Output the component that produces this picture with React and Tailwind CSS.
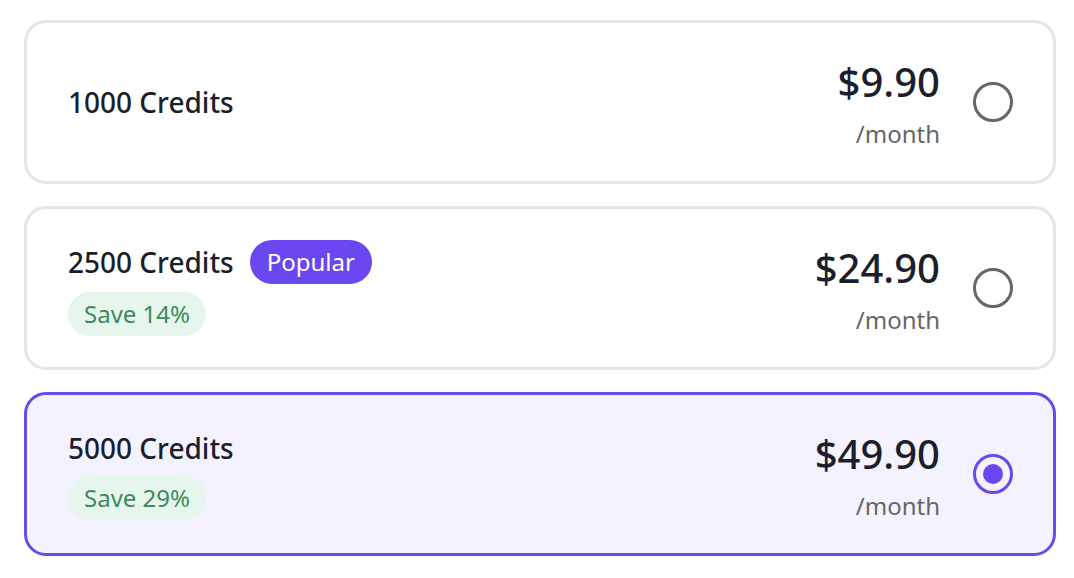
import React, { useState } from 'react';

const plans = [
  { id: 1000, label: '1000 Credits', price: '$9.90' },
  { id: 2500, label: '2500 Credits', price: '$24.90', popular: true, save: 'Save 14%' },
  { id: 5000, label: '5000 Credits', price: '$49.90', save: 'Save 29%' },
];

const App = () => {
  const [selected, setSelected] = useState(5000);

  return (
    <div className="min-h-screen bg-white px-[24px] pt-[20px] font-['Noto_Sans',sans-serif]">
      <div className="flex w-[1032px] flex-col gap-[22px]">
        {plans.map((plan) => {
          const active = plan.id === selected;
          return (
            <button
              key={plan.id}
              onClick={() => setSelected(plan.id)}
              className={`flex h-[164px] items-center rounded-[22px] border-[3px] pl-[41px] pr-[40px] text-left ${
                active ? 'border-[#6a4aec] bg-[#f4f2fe]' : 'border-[#e6e6e6] bg-white'
              }`}
            >
              <div className="flex flex-1 flex-col items-start gap-[8px]">
                <div className="flex items-center gap-[16px]">
                  <span className="text-[28px] font-medium leading-[40px] text-[#1b1e2b]">{plan.label}</span>
                  {plan.popular && (
                    <span className="rounded-full bg-[#6a47f0] px-[17px] text-[24px] leading-[44px] text-white">
                      Popular
                    </span>
                  )}
                </div>
                {plan.save && (
                  <span className="rounded-full bg-[#e6f6ec] px-[16px] text-[24px] leading-[44px] text-[#3e8a5d]">
                    {plan.save}
                  </span>
                )}
              </div>
              <div className="flex flex-col items-end pt-[4px]">
                <span className="text-[40px] font-medium leading-[48px] text-[#1b1e2b]">{plan.price}</span>
                <span className="mt-[12px] text-[24px] leading-[32px] text-[#666666]">/month</span>
              </div>
              <div
                className={`ml-[33px] flex h-[40px] w-[40px] items-center justify-center rounded-full border-[3px] ${
                  active ? 'border-[#6a47f0]' : 'border-[#666666]'
                }`}
              >
                {active && <div className="h-[20px] w-[20px] rounded-full bg-[#6a47f0]" />}
              </div>
            </button>
          );
        })}
      </div>
    </div>
  );
};

export default App;
